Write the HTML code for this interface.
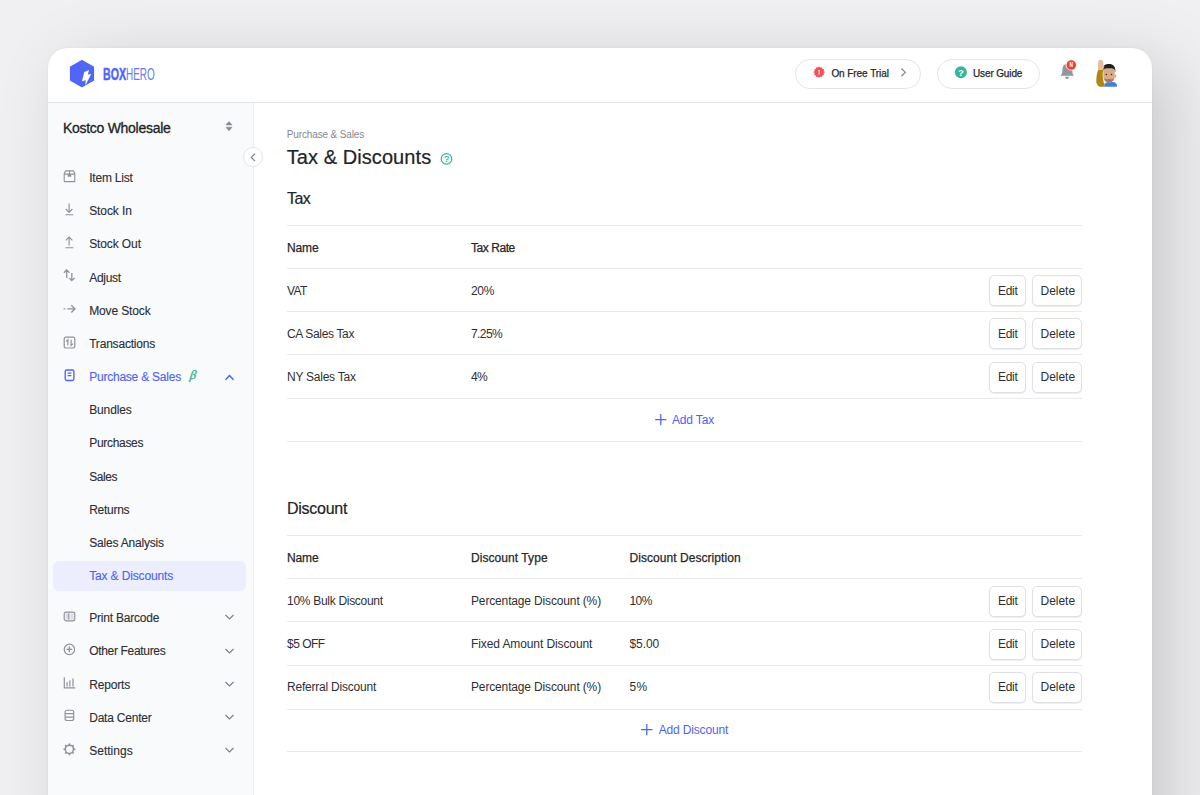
<!DOCTYPE html><html><head><meta charset="utf-8"><style>
*{box-sizing:border-box;margin:0;padding:0}
html,body{width:1200px;height:795px;overflow:hidden}
body{font-family:"Liberation Sans",sans-serif;background:#f0f0f2;position:relative;color:#26272b}
.card{position:absolute;left:48px;top:48px;width:1104px;height:800px;background:#fff;border-radius:20px 20px 0 0;box-shadow:20px 16px 70px rgba(0,0,0,0.17),0 0 3px rgba(0,0,0,0.05)}
.hdr{position:absolute;left:48px;top:102px;width:1104px;height:1px;background:#e3e4e8}
.side{position:absolute;left:48px;top:103px;width:206px;height:700px;background:#f9fafc;border-right:1px solid #ebecef}
.t{position:absolute;white-space:nowrap;line-height:20px}
.abs{position:absolute}
.line{position:absolute;height:1px;background:#e9eaed;left:287px;width:795px}
.btn{position:absolute;height:31px;border:1px solid #dfe0e5;border-radius:5px;background:#fff;box-shadow:0 1px 1px rgba(0,0,0,0.07)}
.pill{position:absolute;height:30px;border:1px solid #e4e5e9;border-radius:15px;background:#fff}
svg{position:absolute;overflow:visible}
.m{-webkit-text-stroke:0.25px currentColor}
</style></head><body>
<div class="card"></div><div class="hdr"></div><div class="side"></div>
<svg style="left:64px;top:55px" width="40" height="40" viewBox="64 55 40 40">
<path d="M81.9 60.6 L93.4 67 L93.4 80.2 L81.9 86.6 L70.6 80.2 L70.6 67 Z" fill="#4f66f6" stroke="#4f66f6" stroke-width="1.4" stroke-linejoin="round"/>
<path d="M84.3 71.9 L89 69.9 L87.8 74.5 L91.2 73.9 L85.3 85.4 L85.7 80.2 L81.9 81.2 Z" fill="#fff"/>
</svg>
<div class="t" style="left:103px;top:65px;font-size:17px;font-weight:bold;color:#4f66f6;-webkit-text-stroke:0.5px #4f66f6;transform:scaleX(0.625);transform-origin:0 0">BOX</div>
<div class="t" style="left:126px;top:65px;font-size:17px;color:#6577f6;transform:scaleX(0.585);transform-origin:0 0">HERO</div>
<div class="pill" style="left:795px;top:59px;width:126px"></div>
<svg style="left:812px;top:65px" width="14" height="14" viewBox="812 65 14 14"><circle cx="819.15" cy="72.1" r="4.7" fill="#f05257"/><circle cx="823.75" cy="72.10" r="0.9" fill="#f05257"/><circle cx="823.13" cy="74.40" r="0.9" fill="#f05257"/><circle cx="821.45" cy="76.08" r="0.9" fill="#f05257"/><circle cx="819.15" cy="76.70" r="0.9" fill="#f05257"/><circle cx="816.85" cy="76.08" r="0.9" fill="#f05257"/><circle cx="815.17" cy="74.40" r="0.9" fill="#f05257"/><circle cx="814.55" cy="72.10" r="0.9" fill="#f05257"/><circle cx="815.17" cy="69.80" r="0.9" fill="#f05257"/><circle cx="816.85" cy="68.12" r="0.9" fill="#f05257"/><circle cx="819.15" cy="67.50" r="0.9" fill="#f05257"/><circle cx="821.45" cy="68.12" r="0.9" fill="#f05257"/><circle cx="823.13" cy="69.80" r="0.9" fill="#f05257"/><path d="M818.4 70 H819.9 L819.5 72.3 L819.9 74.6 H818.4 L818.8 72.3 Z" fill="#fff"/></svg>
<div class="t" style="left:831.4px;top:64px;font-size:10px;letter-spacing:-0.067px;color:#26272b;-webkit-text-stroke:0.25px #26272b">On Free Trial</div>
<svg style="left:898px;top:66px" width="10" height="12" viewBox="898 66 10 12"><path d="M901.3 68.5 L905.3 72.4 L901.3 76.3" fill="none" stroke="#858793" stroke-width="1.2"/></svg>
<div class="pill" style="left:937px;top:59px;width:103px"></div>
<svg style="left:954px;top:66px" width="14" height="14" viewBox="954 66 14 14"><circle cx="960.9" cy="72.2" r="6" fill="#36b79a"/><text x="960.9" y="75.9" font-size="9.5" font-weight="bold" text-anchor="middle" fill="#fff" font-family="Liberation Sans">?</text></svg>
<div class="t" style="left:973px;top:64px;font-size:10px;letter-spacing:-0.133px;color:#26272b;-webkit-text-stroke:0.25px #26272b">User Guide</div>
<svg style="left:1056px;top:58px" width="24" height="24" viewBox="1056 58 24 24">
<path d="M1066.5 64 C1063.6 64.2 1062.6 66.8 1062.4 70 L1062.2 72.6 C1062 73.9 1061.3 74.8 1060.6 75.8 L1074 75.8 C1073.3 74.8 1072.6 73.9 1072.4 72.6 L1072.2 70 C1072 66.8 1069.6 64.2 1066.5 64 Z" fill="#93959f"/>
<path d="M1065.1 76.8 H1069.05 C1069 78.2 1068.1 79 1067.1 79 C1066.1 79 1065.2 78.2 1065.1 76.8 Z" fill="#93959f"/>
<circle cx="1071.3" cy="65" r="5.2" fill="#ee3f3f" stroke="#fff" stroke-width="0.8"/>
<text x="0" y="0" font-size="6.5" font-weight="bold" text-anchor="middle" fill="#fff" font-family="Liberation Sans" transform="translate(1071.3 67.3) scale(0.75 1)">N</text>
</svg>
<svg style="left:1092px;top:56px" width="30" height="34" viewBox="1092 56 30 34">
<path d="M1104.4 86.8 L1104.4 84 C1106 82.2 1108 81.8 1110.5 81.8 C1113.5 81.8 1115.8 82.5 1116.9 84.5 L1116.9 86.8 Z" fill="#3f80e4"/>
<path d="M1102.2 71.5 C1101.8 66 1104.5 63.9 1108.9 63.9 C1113.4 63.9 1115.8 66.5 1115.4 72.5 L1114.5 70 L1103.5 70 Z" fill="#1f1f1f"/>
<ellipse cx="1115.3" cy="76" rx="0.9" ry="1.6" fill="#d19f80"/>
<path d="M1103.3 70 C1103.3 68.8 1105 68.3 1109 68.3 C1113 68.3 1114.7 68.8 1114.7 70 L1114.7 76.5 C1114.7 80.5 1112.3 82.6 1109 82.6 C1105.7 82.6 1103.3 80.5 1103.3 76.5 Z" fill="#d9aa8b"/>
<path d="M1104 78 C1105 81.5 1107 82.6 1109 82.6 C1111 82.6 1113 81.5 1114 78 C1112.5 80 1105.5 80 1104 78 Z" fill="#9c7a63"/>
<circle cx="1106.4" cy="74.6" r="0.75" fill="#2a2a2a"/><circle cx="1111.5" cy="74.6" r="0.75" fill="#2a2a2a"/>
<path d="M1107.6 79.3 Q1109 80 1110.4 79.3" stroke="#a0604a" stroke-width="0.7" fill="none"/>
<path d="M1096.3 82 C1096.2 77 1097 72.5 1098.4 69.5 L1103.2 69.5 C1102.6 73 1102.4 77 1103.4 81 C1103.8 83 1104.4 85 1104.8 86.8 L1099.7 86.8 C1098 85.8 1096.6 84.2 1096.3 82 Z" fill="#b08513"/>
<path d="M1098.4 70 C1097.8 66.5 1097.6 62.5 1098.6 60.6 C1099.7 59.5 1101.5 59.6 1102.6 60.4 C1103.3 61.2 1103.4 62.8 1103.3 64.5 L1104.4 66.5 C1103.8 68 1103.4 69 1103.2 70 Z" fill="#e6bd9b"/>
</svg>
<div class="t" style="left:63px;top:118px;font-size:14px;letter-spacing:-0.287px;color:#222327;-webkit-text-stroke:0.3px #222327">Kostco Wholesale</div>
<svg style="left:224px;top:119px" width="10" height="14" viewBox="224 119 10 14"><path d="M229 121.6 L232 124.9 L226 124.9 Z M229 130.8 L232 127.3 L226 127.3 Z" fill="#878994" stroke="#878994" stroke-width="0.6" stroke-linejoin="round"/></svg>
<div class="abs" style="left:243px;top:147px;width:20px;height:20px;border-radius:50%;background:#fff;border:1px solid #e4e5e9"></div>
<svg style="left:248px;top:151px" width="12" height="12" viewBox="248 151 12 12"><path d="M255.1 153.7 L251.2 157.4 L255.1 161.1" fill="none" stroke="#858793" stroke-width="1.25"/></svg>
<div class="abs" style="left:52.5px;top:561px;width:193.5px;height:30px;border-radius:6px;background:#eceefd"></div>
<div class="t" style="left:89.2px;top:168px;font-size:12px;letter-spacing:-0.213px;color:#2d2e33;-webkit-text-stroke:0.12px #2d2e33">Item List</div>
<svg style="left:62.5px;top:169.7px" width="13" height="13" viewBox="0 0 13 13"><path d="M1.2 10.9 V3.6 L2.5 0.9 H10.5 L11.8 3.6 V10.9 Q11.8 11.6 11.1 11.6 H1.9 Q1.2 11.6 1.2 10.9 Z M1.2 4.1 H11.8 M6.5 0.9 V4.1" fill="none" stroke="#8f919b" stroke-width="1.1" stroke-linejoin="round"/><rect x="4.6" y="4.1" width="3.6" height="2.6" fill="#8f919b"/></svg>
<div class="t" style="left:89.2px;top:201px;font-size:12px;letter-spacing:-0.1px;color:#2d2e33;-webkit-text-stroke:0.12px #2d2e33">Stock In</div>
<svg style="left:62.5px;top:202.9px" width="13" height="13" viewBox="0 0 13 13"><path d="M6.1 0.6 V9.4 M2.8 6 L6.1 9.4 L9.4 6 M2.5 11.7 H10.3" fill="none" stroke="#8f919b" stroke-width="1.15"/></svg>
<div class="t" style="left:89.2px;top:234px;font-size:12px;letter-spacing:-0.112px;color:#2d2e33;-webkit-text-stroke:0.12px #2d2e33">Stock Out</div>
<svg style="left:62.5px;top:236.0px" width="13" height="13" viewBox="0 0 13 13"><path d="M6.1 9.6 V1 M2.8 4.3 L6.1 1 L9.4 4.3 M2.5 11.7 H10.3" fill="none" stroke="#8f919b" stroke-width="1.15"/></svg>
<div class="t" style="left:89.2px;top:268px;font-size:12px;letter-spacing:-0.3px;color:#2d2e33;-webkit-text-stroke:0.12px #2d2e33">Adjust</div>
<svg style="left:62.5px;top:269.2px" width="13" height="13" viewBox="0 0 13 13"><path d="M3.7 8.9 V1 M0.9 3.8 L3.7 1 L6.5 3.8 M8.8 3.9 V11.7 M6 8.9 L8.8 11.7 L11.6 8.9" fill="none" stroke="#8f919b" stroke-width="1.3"/></svg>
<div class="t" style="left:89.2px;top:301px;font-size:12px;letter-spacing:-0.133px;color:#2d2e33;-webkit-text-stroke:0.12px #2d2e33">Move Stock</div>
<svg style="left:62.5px;top:302.4px" width="13" height="13" viewBox="0 0 13 13"><path d="M0.6 6.9 H2.4 M4.3 6.9 H11.6 M8.3 3.2 L12 6.9 L8.3 10.6" fill="none" stroke="#8f919b" stroke-width="1.35"/></svg>
<div class="t" style="left:89.2px;top:334px;font-size:12px;letter-spacing:-0.2px;color:#2d2e33;-webkit-text-stroke:0.12px #2d2e33">Transactions</div>
<svg style="left:62.5px;top:335.6px" width="13" height="13" viewBox="0 0 13 13"><rect x="1.2" y="1.2" width="10.6" height="10.8" rx="1.7" fill="none" stroke="#8f919b" stroke-width="1.2"/><path d="M4.9 9.6 V3.7 L3.1 5.6 M8.1 3.7 V9.6 L9.9 7.7" fill="none" stroke="#8f919b" stroke-width="1.2"/></svg>
<div class="t" style="left:89.2px;top:367px;font-size:12px;letter-spacing:-0.227px;color:#4e63f4;-webkit-text-stroke:0.12px #4e63f4">Purchase &amp; Sales</div>
<svg style="left:62.5px;top:368.7px" width="13" height="13" viewBox="0 0 13 13"><rect x="2.2" y="0.95" width="8.7" height="10.5" rx="1.6" fill="none" stroke="#4e63f4" stroke-width="1.35"/><path d="M4.6 4.1 H8.5 M4.6 6.7 H8.5" fill="none" stroke="#4e63f4" stroke-width="1.3"/></svg>
<div class="t" style="left:89.2px;top:400px;font-size:12px;letter-spacing:-0.133px;color:#2d2e33;-webkit-text-stroke:0.12px #2d2e33">Bundles</div>
<div class="t" style="left:89.2px;top:433px;font-size:12px;letter-spacing:-0.3px;color:#2d2e33;-webkit-text-stroke:0.12px #2d2e33">Purchases</div>
<div class="t" style="left:89.2px;top:467px;font-size:12px;letter-spacing:-0.425px;color:#2d2e33;-webkit-text-stroke:0.12px #2d2e33">Sales</div>
<div class="t" style="left:89.2px;top:500px;font-size:12px;letter-spacing:-0.267px;color:#2d2e33;-webkit-text-stroke:0.12px #2d2e33">Returns</div>
<div class="t" style="left:89.2px;top:533px;font-size:12px;letter-spacing:-0.2px;color:#2d2e33;-webkit-text-stroke:0.12px #2d2e33">Sales Analysis</div>
<div class="t" style="left:89.2px;top:566px;font-size:12px;letter-spacing:-0.143px;color:#4e63f4;-webkit-text-stroke:0.12px #4e63f4">Tax &amp; Discounts</div>
<div class="t" style="left:89.2px;top:608px;font-size:12px;letter-spacing:-0.208px;color:#2d2e33;-webkit-text-stroke:0.12px #2d2e33">Print Barcode</div>
<svg style="left:62.5px;top:609.9px" width="13" height="13" viewBox="0 0 13 13"><rect x="2.6" y="3.3" width="8" height="6.3" fill="#dcdde3"/><rect x="1.2" y="2.1" width="10.6" height="8.7" rx="2" fill="none" stroke="#8f919b" stroke-width="1.15"/><path d="M5.8 3.5 V9.4" stroke="#8f919b" stroke-width="1.1"/><path d="M7.2 3.5 V9.4" stroke="#fff" stroke-width="0.8"/></svg>
<svg style="left:224px;top:614.4px" width="11" height="7" viewBox="0 0 11 7"><path d="M1.5 1 L5.5 5 L9.5 1" fill="none" stroke="#7d7f89" stroke-width="1.2"/></svg>
<div class="t" style="left:89.2px;top:641px;font-size:12px;letter-spacing:-0.323px;color:#2d2e33;-webkit-text-stroke:0.12px #2d2e33">Other Features</div>
<svg style="left:62.5px;top:643.1px" width="13" height="13" viewBox="0 0 13 13"><circle cx="6.4" cy="6.4" r="5.2" fill="none" stroke="#8f919b" stroke-width="1.2"/><path d="M6.4 3.5 V9.3 M3.5 6.4 H9.3" fill="none" stroke="#8f919b" stroke-width="1.4"/></svg>
<svg style="left:224px;top:647.6px" width="11" height="7" viewBox="0 0 11 7"><path d="M1.5 1 L5.5 5 L9.5 1" fill="none" stroke="#7d7f89" stroke-width="1.2"/></svg>
<div class="t" style="left:89.2px;top:675px;font-size:12px;letter-spacing:-0.167px;color:#2d2e33;-webkit-text-stroke:0.12px #2d2e33">Reports</div>
<svg style="left:62.5px;top:676.2px" width="13" height="13" viewBox="0 0 13 13"><path d="M1.3 1.2 V11.8 H12.2" fill="none" stroke="#8f919b" stroke-width="1.2"/><path d="M4.1 6.5 V10.1 M6.9 4.8 V10.1 M10 2.9 V10.1" fill="none" stroke="#8f919b" stroke-width="1.2" stroke-linecap="round"/></svg>
<svg style="left:224px;top:680.8px" width="11" height="7" viewBox="0 0 11 7"><path d="M1.5 1 L5.5 5 L9.5 1" fill="none" stroke="#7d7f89" stroke-width="1.2"/></svg>
<div class="t" style="left:89.2px;top:708px;font-size:12px;letter-spacing:-0.21px;color:#2d2e33;-webkit-text-stroke:0.12px #2d2e33">Data Center</div>
<svg style="left:62.5px;top:709.4px" width="13" height="13" viewBox="0 0 13 13"><rect x="2.1" y="1.2" width="8.6" height="10.3" rx="2" fill="none" stroke="#8f919b" stroke-width="1.15"/><path d="M2.1 4.6 H10.7 M2.1 8.1 H10.7" fill="none" stroke="#8f919b" stroke-width="1.15"/></svg>
<svg style="left:224px;top:713.9px" width="11" height="7" viewBox="0 0 11 7"><path d="M1.5 1 L5.5 5 L9.5 1" fill="none" stroke="#7d7f89" stroke-width="1.2"/></svg>
<div class="t" style="left:89.2px;top:741px;font-size:12px;letter-spacing:0.014px;color:#2d2e33;-webkit-text-stroke:0.12px #2d2e33">Settings</div>
<svg style="left:62.5px;top:742.6px" width="13" height="13" viewBox="0 0 13 13"><circle cx="6.4" cy="6.3" r="4.1" fill="none" stroke="#8f919b" stroke-width="1.5"/><circle cx="11.50" cy="6.30" r="0.95" fill="#8f919b"/><circle cx="10.01" cy="9.91" r="0.95" fill="#8f919b"/><circle cx="6.40" cy="11.40" r="0.95" fill="#8f919b"/><circle cx="2.79" cy="9.91" r="0.95" fill="#8f919b"/><circle cx="1.30" cy="6.30" r="0.95" fill="#8f919b"/><circle cx="2.79" cy="2.69" r="0.95" fill="#8f919b"/><circle cx="6.40" cy="1.20" r="0.95" fill="#8f919b"/><circle cx="10.01" cy="2.69" r="0.95" fill="#8f919b"/></svg>
<svg style="left:224px;top:747.1px" width="11" height="7" viewBox="0 0 11 7"><path d="M1.5 1 L5.5 5 L9.5 1" fill="none" stroke="#7d7f89" stroke-width="1.2"/></svg>
<div class="t" style="left:189.8px;top:364.7px;font-size:12.5px;font-style:italic;font-family:'Liberation Serif';color:#38b48f;-webkit-text-stroke:0.45px #38b48f;transform:skewX(-8deg)">&#946;</div>
<svg style="left:224px;top:373.7px" width="11" height="7" viewBox="0 0 11 7"><path d="M1.5 5.8 L5.5 1.5 L9.5 5.8" fill="none" stroke="#4e63f4" stroke-width="1.5"/></svg>
<div class="t" style="left:286.75px;top:125px;font-size:10px;letter-spacing:-0.133px;color:#858792;">Purchase &amp; Sales</div>
<div class="t" style="left:286.75px;top:147px;font-size:20px;letter-spacing:0.071px;color:#222327;-webkit-text-stroke:0.2px #222327">Tax &amp; Discounts</div>
<svg style="left:439px;top:152px" width="14" height="14" viewBox="439 152 14 14"><circle cx="446.5" cy="158.9" r="5.3" fill="none" stroke="#36b38f" stroke-width="1.2"/><text x="446.5" y="162.1" font-size="8.5" text-anchor="middle" fill="#36b38f" font-family="Liberation Sans" stroke="#36b38f" stroke-width="0.25">?</text></svg>
<div class="t" style="left:287px;top:189px;font-size:16px;letter-spacing:-0.6px;color:#222327;-webkit-text-stroke:0.2px #222327">Tax</div>
<div class="line" style="top:225px"></div>
<div class="line" style="top:268px"></div>
<div class="line" style="top:311px"></div>
<div class="line" style="top:354px"></div>
<div class="line" style="top:398px"></div>
<div class="line" style="top:441px"></div>
<div class="t" style="left:287px;top:238px;font-size:12px;letter-spacing:-0.133px;color:#26272b;-webkit-text-stroke:0.25px #26272b">Name</div>
<div class="t" style="left:471px;top:238px;font-size:12px;letter-spacing:-0.443px;color:#26272b;-webkit-text-stroke:0.25px #26272b">Tax Rate</div>
<div class="t" style="left:287px;top:281px;font-size:12px;letter-spacing:-0.6px;color:#2e2f34;">VAT</div>
<div class="t" style="left:471px;top:281px;font-size:12px;letter-spacing:-0.3px;color:#2e2f34;">20%</div>
<div class="btn" style="left:989px;top:275px;width:37px"></div>
<div class="btn" style="left:1032px;top:275px;width:50px"></div>
<div class="t" style="left:997.9px;top:281px;font-size:12px;letter-spacing:-0.233px;color:#2e2f34;">Edit</div>
<div class="t" style="left:1040.6px;top:281px;font-size:12px;letter-spacing:-0.04px;color:#2e2f34;">Delete</div>
<div class="t" style="left:287px;top:324px;font-size:12px;letter-spacing:-0.336px;color:#2e2f34;">CA Sales Tax</div>
<div class="t" style="left:471px;top:324px;font-size:12px;letter-spacing:-0.6px;color:#2e2f34;">7.25%</div>
<div class="btn" style="left:989px;top:318px;width:37px"></div>
<div class="btn" style="left:1032px;top:318px;width:50px"></div>
<div class="t" style="left:997.9px;top:324px;font-size:12px;letter-spacing:-0.233px;color:#2e2f34;">Edit</div>
<div class="t" style="left:1040.6px;top:324px;font-size:12px;letter-spacing:-0.04px;color:#2e2f34;">Delete</div>
<div class="t" style="left:287px;top:367px;font-size:12px;letter-spacing:-0.245px;color:#2e2f34;">NY Sales Tax</div>
<div class="t" style="left:471px;top:367px;font-size:12px;letter-spacing:-0.6px;color:#2e2f34;">4%</div>
<div class="btn" style="left:989px;top:362px;width:37px"></div>
<div class="btn" style="left:1032px;top:362px;width:50px"></div>
<div class="t" style="left:997.9px;top:367px;font-size:12px;letter-spacing:-0.233px;color:#2e2f34;">Edit</div>
<div class="t" style="left:1040.6px;top:367px;font-size:12px;letter-spacing:-0.04px;color:#2e2f34;">Delete</div>
<svg style="left:654.5px;top:413.8px" width="12" height="12" viewBox="0 0 12 12"><path d="M5.8 0 V11.2 M0.2 5.6 H11.4" stroke="#4e63f4" stroke-width="1.25"/></svg>
<div class="t" style="left:672px;top:410px;font-size:12px;letter-spacing:-0.167px;color:#4e63f4;">Add Tax</div>
<div class="t" style="left:287px;top:499px;font-size:16px;letter-spacing:-0.257px;color:#222327;-webkit-text-stroke:0.2px #222327">Discount</div>
<div class="line" style="top:535px"></div>
<div class="line" style="top:578px"></div>
<div class="line" style="top:621px"></div>
<div class="line" style="top:665px"></div>
<div class="line" style="top:709px"></div>
<div class="line" style="top:751px"></div>
<div class="t" style="left:287px;top:548px;font-size:12px;letter-spacing:-0.133px;color:#26272b;-webkit-text-stroke:0.25px #26272b">Name</div>
<div class="t" style="left:471px;top:548px;font-size:12px;letter-spacing:0.062px;color:#26272b;-webkit-text-stroke:0.25px #26272b">Discount Type</div>
<div class="t" style="left:629.5px;top:548px;font-size:12px;letter-spacing:0.053px;color:#26272b;-webkit-text-stroke:0.25px #26272b">Discount Description</div>
<div class="t" style="left:287px;top:591px;font-size:12px;letter-spacing:-0.294px;color:#2e2f34;">10% Bulk Discount</div>
<div class="t" style="left:471px;top:591px;font-size:12px;letter-spacing:-0.148px;color:#2e2f34;">Percentage Discount (%)</div>
<div class="t" style="left:629.5px;top:591px;font-size:12px;letter-spacing:-0.6px;color:#2e2f34;">10%</div>
<div class="btn" style="left:989px;top:586px;width:37px"></div>
<div class="btn" style="left:1032px;top:586px;width:50px"></div>
<div class="t" style="left:997.9px;top:591px;font-size:12px;letter-spacing:-0.233px;color:#2e2f34;">Edit</div>
<div class="t" style="left:1040.6px;top:591px;font-size:12px;letter-spacing:-0.04px;color:#2e2f34;">Delete</div>
<div class="t" style="left:287px;top:634px;font-size:12px;letter-spacing:-0.5px;color:#2e2f34;">$5 OFF</div>
<div class="t" style="left:471px;top:634px;font-size:12px;letter-spacing:-0.1px;color:#2e2f34;">Fixed Amount Discount</div>
<div class="t" style="left:629.5px;top:634px;font-size:12px;letter-spacing:-0.062px;color:#2e2f34;">$5.00</div>
<div class="btn" style="left:989px;top:629px;width:37px"></div>
<div class="btn" style="left:1032px;top:629px;width:50px"></div>
<div class="t" style="left:997.9px;top:634px;font-size:12px;letter-spacing:-0.233px;color:#2e2f34;">Edit</div>
<div class="t" style="left:1040.6px;top:634px;font-size:12px;letter-spacing:-0.04px;color:#2e2f34;">Delete</div>
<div class="t" style="left:287px;top:677px;font-size:12px;letter-spacing:-0.213px;color:#2e2f34;">Referral Discount</div>
<div class="t" style="left:471px;top:677px;font-size:12px;letter-spacing:-0.148px;color:#2e2f34;">Percentage Discount (%)</div>
<div class="t" style="left:629.5px;top:677px;font-size:12px;letter-spacing:0.3px;color:#2e2f34;">5%</div>
<div class="btn" style="left:989px;top:672px;width:37px"></div>
<div class="btn" style="left:1032px;top:672px;width:50px"></div>
<div class="t" style="left:997.9px;top:677px;font-size:12px;letter-spacing:-0.233px;color:#2e2f34;">Edit</div>
<div class="t" style="left:1040.6px;top:677px;font-size:12px;letter-spacing:-0.04px;color:#2e2f34;">Delete</div>
<svg style="left:641px;top:724.3px" width="12" height="12" viewBox="0 0 12 12"><path d="M5.8 0 V11.2 M0.2 5.6 H11.4" stroke="#4e63f4" stroke-width="1.25"/></svg>
<div class="t" style="left:658.7px;top:720px;font-size:12px;letter-spacing:-0.164px;color:#4e63f4;">Add Discount</div>
</body></html>
